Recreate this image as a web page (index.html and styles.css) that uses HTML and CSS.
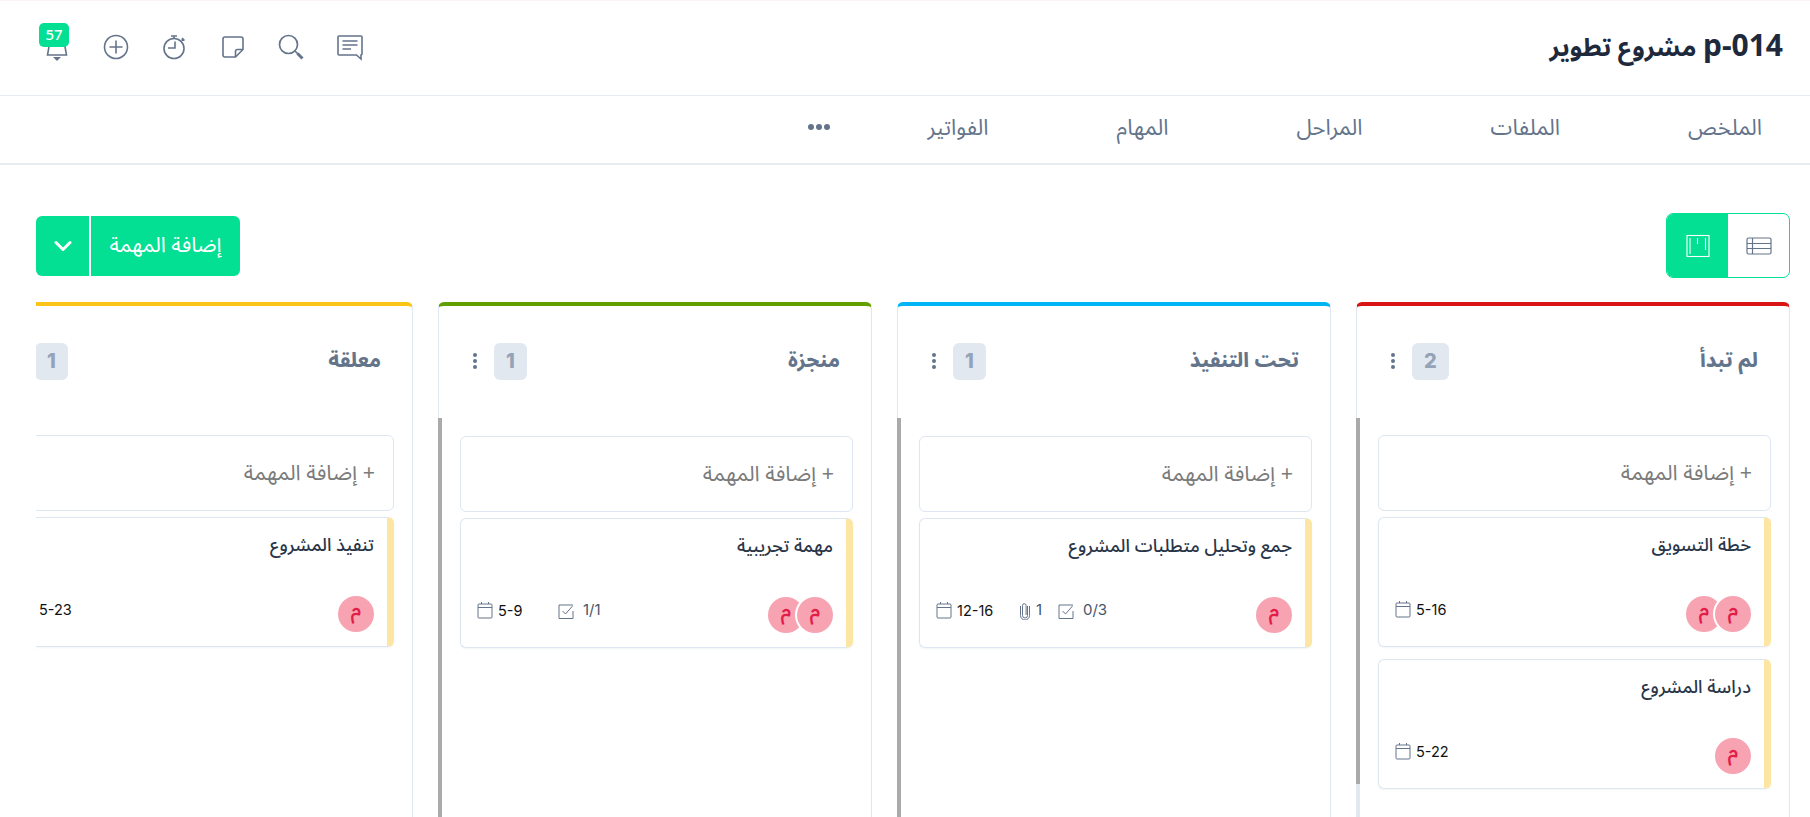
FILE: index.html
```html
<!DOCTYPE html>
<html lang="ar" dir="rtl">
<head>
<meta charset="utf-8">
<title>p-014 مشروع تطوير</title>
<link rel="stylesheet" href="styles.css">
</head>
<body>
<header class="topbar">
  <h1 class="project-title"><span class="code">p-014</span> مشروع تطوير</h1>
  <div class="top-icons">
    <span class="top-icon"><svg width="28" height="28" viewBox="0 0 28 28" fill="none" stroke="#64748b" stroke-width="1.6"><path d="M3 3h22a1 1 0 0 1 1 1v17a1 1 0 0 1-1 1v4l-4.500-4H3a1 1 0 0 1-1-1V4a1 1 0 0 1 1-1z"/><path d="M6.500 8h15M6.500 12h15M6.500 16h8.500"/></svg></span>
    <span class="top-icon"><svg width="28" height="28" viewBox="0 0 28 28" fill="none" stroke="#64748b" stroke-width="1.700"><circle cx="11.500" cy="11.500" r="9"/><path d="M18 18l3 3"/><path d="M20.500 20.500l5 5" stroke-width="3"/></svg></span>
    <span class="top-icon"><svg width="28" height="28" viewBox="0 0 28 28" fill="none" stroke="#64748b" stroke-width="1.600"><path d="M24 16.500V6a2 2 0 0 0-2-2H6a2 2 0 0 0-2 2v16a2 2 0 0 0 2 2h10.500z"/><path d="M24 16.500h-5.500a2 2 0 0 0-2 2V24"/></svg></span>
    <span class="top-icon"><svg width="28" height="28" viewBox="0 0 28 28" fill="none" stroke="#64748b" stroke-width="1.600"><circle cx="14" cy="15.500" r="10"/><path d="M11 3h6M14 3v2.500M22 5l2.500 2.500M23.500 5.500l-2 2"/><path d="M15 8.500v6.500H8"/></svg></span>
    <span class="top-icon"><svg width="28" height="28" viewBox="0 0 28 28" fill="none" stroke="#64748b" stroke-width="1.600"><circle cx="14" cy="14" r="11.500"/><path d="M14 7.500v13M7.500 14h13"/></svg></span>
    <span class="top-icon bell"><svg width="28" height="28" viewBox="0 0 28 28" fill="none" stroke="#64748b" stroke-width="1.600"><path d="M14 3c-5 0-7 3-7.500 8L4.500 22h19L21.500 11C21 6 19 3 14 3z"/></svg><svg class="bell-clap" width="8" height="4" viewBox="0 0 8 4"><path d="M0 0h8L4 4z" fill="#64748b"/></svg><span class="badge">57</span></span>
  </div>
</header>

<nav class="tabs">
  <a class="tab">الملخص</a>
  <a class="tab">الملفات</a>
  <a class="tab">المراحل</a>
  <a class="tab">المهام</a>
  <a class="tab">الفواتير</a>
  <a class="tab-more"><i></i><i></i><i></i></a>
</nav>

<main class="content">
  <div class="toolbar">
    <div class="view-toggle">
      <span class="view-btn"><svg width="26" height="18" viewBox="0 0 26 18" fill="none" stroke="#64748b" stroke-width="1.200"><rect x="1" y="1" width="24" height="16" rx="1.500"/><path d="M1 6.500h24M1 11.500h24" /><path d="M6.500 1v16"/></svg></span>
      <span class="view-btn active"><svg width="24" height="24" viewBox="0 0 24 24" fill="none" stroke="#fff" stroke-width="1.100"><rect x="1" y="1.500" width="22" height="21"/><path d="M4 4v16M11.500 4v6M19.500 4v12"/></svg></span>
    </div>
    <div class="add-split">
      <button class="add-main">إضافة المهمة</button>
      <button class="add-caret"><svg width="18" height="12" viewBox="0 0 18 12" fill="none" stroke="#fff" stroke-width="3" stroke-linecap="round" stroke-linejoin="round"><path d="M2 2.500l7 7 7-7"/></svg></button>
    </div>
  </div>

  <div class="board">

    <section class="column red">
      <div class="col-head">
        <h2 class="col-title">لم تبدأ</h2>
        <div class="col-tools">
          <span class="count">2</span>
          <span class="kebab"><i></i><i></i><i></i></span>
        </div>
      </div>
      <div class="col-body">
        <span class="scroll-track"></span><span class="scroll-thumb short"></span>
        <div class="add-task">+ إضافة المهمة</div>
        <article class="card">
          <h3 class="card-title">خطة التسويق</h3>
          <div class="card-foot">
            <div class="avatars"><span class="avatar">م</span><span class="avatar">م</span></div>
            <div class="meta">
              <span class="meta-item date"><svg class="ic-cal" width="16" height="18" viewBox="0 0 16 18" fill="none" stroke="#64748b"><rect x="1" y="3" width="14" height="14" rx="1"/><path d="M1 6.500h14M4.500 1v2M11.500 1v2"/></svg><span class="date-text">5-16</span></span>
            </div>
          </div>
        </article>
        <article class="card">
          <h3 class="card-title">دراسة المشروع</h3>
          <div class="card-foot">
            <div class="avatars"><span class="avatar">م</span></div>
            <div class="meta">
              <span class="meta-item date"><svg class="ic-cal" width="16" height="18" viewBox="0 0 16 18" fill="none" stroke="#64748b"><rect x="1" y="3" width="14" height="14" rx="1"/><path d="M1 6.500h14M4.500 1v2M11.500 1v2"/></svg><span class="date-text">5-22</span></span>
            </div>
          </div>
        </article>
      </div>
    </section>

    <section class="column blue lower">
      <div class="col-head">
        <h2 class="col-title">تحت التنفيذ</h2>
        <div class="col-tools">
          <span class="count">1</span>
          <span class="kebab"><i></i><i></i><i></i></span>
        </div>
      </div>
      <div class="col-body">
        <span class="scroll-thumb"></span>
        <div class="add-task">+ إضافة المهمة</div>
        <article class="card">
          <h3 class="card-title">جمع وتحليل متطلبات المشروع</h3>
          <div class="card-foot">
            <div class="avatars"><span class="avatar">م</span></div>
            <div class="meta">
              <span class="meta-item date"><svg class="ic-cal" width="16" height="18" viewBox="0 0 16 18" fill="none" stroke="#64748b"><rect x="1" y="3" width="14" height="14" rx="1"/><path d="M1 6.500h14M4.500 1v2M11.500 1v2"/></svg><span class="date-text">12-16</span></span>
              <span class="meta-item clip"><svg class="ic-clip" width="10" height="18" viewBox="0 0 10 18" fill="none" stroke="#64748b"><path d="M7.500 4v9.500a2.500 2.500 0 0 1-5 0V3.500a1.800 1.800 0 0 1 3.600 0V13"/><path d="M9.500 4v9.500a4.500 4.500 0 0 1-9 0V4"/></svg><span class="count-text">1</span></span>
              <span class="meta-item"><svg class="ic-check" width="16" height="16" viewBox="0 0 16 16" fill="none" stroke="#64748b"><path d="M15 2H1v13.500h14V8"/><path d="M4.500 8l3 3L14.500 3"/></svg><span class="count-text">0/3</span></span>
            </div>
          </div>
        </article>
      </div>
    </section>

    <section class="column green lower">
      <div class="col-head">
        <h2 class="col-title">منجزة</h2>
        <div class="col-tools">
          <span class="count">1</span>
          <span class="kebab"><i></i><i></i><i></i></span>
        </div>
      </div>
      <div class="col-body">
        <span class="scroll-thumb"></span>
        <div class="add-task">+ إضافة المهمة</div>
        <article class="card">
          <h3 class="card-title">مهمة تجريبية</h3>
          <div class="card-foot">
            <div class="avatars"><span class="avatar">م</span><span class="avatar">م</span></div>
            <div class="meta">
              <span class="meta-item date"><svg class="ic-cal" width="16" height="18" viewBox="0 0 16 18" fill="none" stroke="#64748b"><rect x="1" y="3" width="14" height="14" rx="1"/><path d="M1 6.500h14M4.500 1v2M11.500 1v2"/></svg><span class="date-text">5-9</span></span>
              <span class="meta-item"><svg class="ic-check" width="16" height="16" viewBox="0 0 16 16" fill="none" stroke="#64748b"><path d="M15 2H1v13.500h14V8"/><path d="M4.500 8l3 3L14.500 3"/></svg><span class="count-text">1/1</span></span>
            </div>
          </div>
        </article>
      </div>
    </section>

    <section class="column yellow">
      <div class="col-head">
        <h2 class="col-title">معلقة</h2>
        <div class="col-tools">
          <span class="count">1</span>
          <span class="kebab"><i></i><i></i><i></i></span>
        </div>
      </div>
      <div class="col-body">
        <span class="scroll-thumb"></span>
        <div class="add-task">+ إضافة المهمة</div>
        <article class="card">
          <h3 class="card-title">تنفيذ المشروع</h3>
          <div class="card-foot">
            <div class="avatars"><span class="avatar">م</span></div>
            <div class="meta">
              <span class="meta-item date"><svg class="ic-cal" width="16" height="18" viewBox="0 0 16 18" fill="none" stroke="#64748b"><rect x="1" y="3" width="14" height="14" rx="1"/><path d="M1 6.500h14M4.500 1v2M11.500 1v2"/></svg><span class="date-text">5-23</span></span>
            </div>
          </div>
        </article>
      </div>
    </section>

  </div>
</main>
</body>
</html>
```

FILE: styles.css
```css
* { box-sizing: border-box; }
html, body { margin: 0; height: 100%; }
body {
  height: 817px;
  overflow: hidden;
  background: #fff;
  color: #1e293b;
  font-family: "Noto Sans Arabic", "Noto Sans", "DejaVu Sans", sans-serif;
  border-top: 1px solid #fdf2f6;
}
h1, h2, h3 { margin: 0; }

.topbar {
  height: 95px;
  display: flex;
  align-items: center;
  justify-content: space-between;
  padding: 0 27px 0 36px;
  border-bottom: 1px solid #e7ecf3;
}
.project-title { font-size: 25.200px; font-weight: 700; color: #1e293b; }
.project-title .code { font-size: 30px; font-family: "Noto Sans", sans-serif; }
.top-icons { display: flex; align-items: center; gap: 30.500px; padding-left: 7px; margin-top: -2px; }
.top-icon { position: relative; display: flex; width: 28px; height: 28px; }
.bell-clap { position: absolute; left: 10px; top: 24px; }
.badge {
  position: absolute;
  top: -10px; left: -4px;
  width: 30px; height: 24px;
  background: #03df93;
  color: #fff;
  border-radius: 5px;
  font-size: 15px;
  font-weight: 500;
  display: flex; align-items: center; justify-content: center;
}

.tabs {
  height: 69px;
  display: flex;
  align-items: center;
  padding: 0 48px 0 0;
  gap: 128px;
  border-bottom: 2px solid #e7ecf3;
}
.tab { font-size: 22px; color: #64748b; margin-top: -3px; }
.tab-more { display: flex; gap: 2px; margin-top: -6px; margin-right: -30px; }
.tab-more i { width: 6px; height: 6px; border-radius: 50%; background: #64748b; display: block; }

.content { padding: 0 20px 0 36px; }
.toolbar {
  display: flex;
  align-items: center;
  justify-content: space-between;
  padding-top: 48px;
}
.view-toggle {
  display: flex;
  width: 124px; height: 65px;
  border: 1px solid #03df93;
  border-radius: 7px;
  overflow: hidden;
}
.view-btn { flex: 1; display: flex; align-items: center; justify-content: center; }
.view-btn.active { background: #03df93; }
.add-split { display: flex; height: 60px; gap: 2px; }
.add-main, .add-caret {
  border: 0;
  background: #03df93;
  color: #fff;
  font: inherit;
  font-size: 21.300px;
  font-weight: 400;
  display: flex; align-items: center; justify-content: center;
  padding: 0;
}
.add-main { width: 149px; border-radius: 0 6px 6px 0; }
.add-caret { width: 53px; border-radius: 6px 0 0 6px; }

.board {
  display: flex;
  gap: 25px;
  margin-top: 24px;
  overflow: hidden;
  height: 515px;
}
.column {
  flex: 0 0 434px;
  height: 620px;
  border: 1px solid #e0e7f1;
  border-top: 4px solid;
  border-radius: 6px 6px 0 0;
}
.red { border-top-color: #d91414; }
.blue { border-top-color: #00b4f5; }
.green { border-top-color: #629f03; }
.yellow { border-top-color: #fac515; }

.col-head {
  height: 112px;
  display: flex;
  align-items: center;
  justify-content: space-between;
  padding: 0 31px 2px 0;
}
.col-title { font-size: 20px; font-weight: 800; color: #64748b; }
.col-tools { display: flex; align-items: center; gap: 17px; padding-left: 34px; }
.count {
  height: 37px;
  padding: 0 12px;
  background: #e2e8f0;
  color: #94a3b8;
  border-radius: 6px;
  font-family: "Inter", sans-serif;
  font-size: 20px;
  font-weight: 800;
  display: flex; align-items: center; justify-content: center;
}
.kebab { display: flex; flex-direction: column; gap: 2px; }
.kebab i { width: 4px; height: 4px; border-radius: 50%; background: #64748b; display: block; }

.col-body {
  position: relative;
  padding: 17px 18px 0 21px;
  height: 500px;
}
.lower .col-body { padding-top: 18px; }
.scroll-thumb, .scroll-track { position: absolute; left: -1px; top: 0; width: 4px; }
.scroll-track { bottom: 0; background: #e2e8f0; }
.scroll-thumb { bottom: 0; background: #aaa; }
.scroll-thumb.short { bottom: auto; height: 366px; }

.add-task {
  height: 76px;
  border: 1px solid #dde6f1;
  border-radius: 6px;
  display: flex;
  align-items: center;
  padding: 0 18px;
  font-size: 21.500px;
  color: #7b7b7b;
}
.card {
  height: 130px;
  margin-top: 6px;
  border: 1px solid #dde6f1;
  border-right: 7px solid #fde6a4;
  border-radius: 6px;
  padding: 14px 13px 0 16px;
  box-shadow: 0 1px 2px rgba(148, 163, 184, .12);
}
.card + .card { margin-top: 12px; }
.card-title { font-size: 18px; font-weight: 500; color: #293548; line-height: 26px; }
.card-foot {
  display: flex;
  justify-content: space-between;
  margin-top: 38px;
}
.avatars { display: flex; }
.avatar {
  width: 36px; height: 36px;
  border-radius: 50%;
  background: #f7a3b2;
  color: #e11d48;
  font-size: 20px;
  font-weight: 600;
  line-height: 1;
  padding-bottom: 8px;
  display: flex; align-items: center; justify-content: center;
}
.avatar:first-child { position: relative; z-index: 1; box-shadow: 0 0 0 2px #fff; }
.avatar + .avatar { margin-right: -7px; }
.meta { display: flex; direction: ltr; align-items: flex-start; margin-top: 4px; }
.meta-item { display: flex; align-items: flex-start; gap: 9px; }
.date { min-width: 81px; gap: 5px; }
.clip { min-width: 38px; gap: 6px; margin-left: 3px; }
.date-text { font-family: "Inter", sans-serif; font-size: 14.500px; color: #111; line-height: 20px; }
.count-text { font-family: "Inter", sans-serif; font-size: 15px; color: #475569; line-height: 18px; }
.ic-cal { flex: none; }
.ic-clip { margin-top: 1px; }
.ic-check { margin-top: 2px; }
```
